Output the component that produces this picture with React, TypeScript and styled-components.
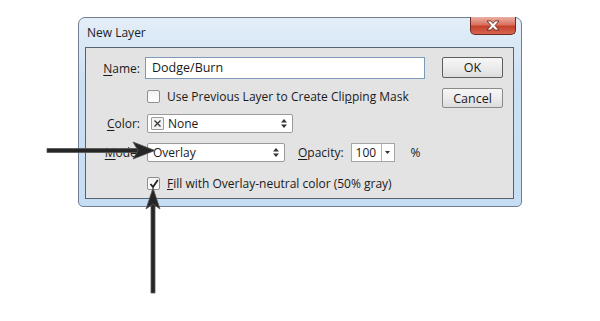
import styled, { createGlobalStyle } from 'styled-components';

const GlobalStyle = createGlobalStyle`
	html, body {
		margin: 0;
		padding: 0;
		background: #ffffff;
	}
	body {
		font-family: 'Open Sans', 'Liberation Sans', sans-serif;
	}
`;

const Stage = styled.div`
	position: relative;
	width: 600px;
	height: 321px;
	box-sizing: border-box;
	padding: 17px 0 0 78px;
	overflow: hidden;
`;

const Window = styled.div`
	width: 444px;
	height: 190px;
	box-sizing: border-box;
	border: 1px solid #6f7f8f;
	border-radius: 7px 7px 5px 5px;
	background: linear-gradient(180deg, #e4eef8 0%, #cbe0f3 35%, #c6def3 100%);
	display: flex;
	flex-direction: column;
`;

const TitleBar = styled.div`
	height: 29px;
	display: flex;
	justify-content: space-between;
	align-items: flex-start;
	padding-left: 8px;
	color: #1b1b1b;
	font-size: 12px;
	h1 {
		font-size: 12px;
		font-weight: normal;
		margin: 0;
		line-height: 29px;
	}
`;

const CloseButton = styled.div`
	width: 46px;
	height: 18px;
	margin: -1px 5px 0 0;
	box-sizing: border-box;
	border: 1px solid #6b2a22;
	border-top: none;
	border-radius: 0 0 5px 5px;
	background: linear-gradient(180deg, #eab0a4 0%, #d9725f 45%, #c4412c 55%, #d8654e 100%);
	display: flex;
	justify-content: center;
	align-items: center;
`;

const Panel = styled.div`
	flex: 1;
	margin: 0 7px 7px 6px;
	border: 1px solid #56626e;
	background: #e3e3e3;
	display: flex;
	padding-top: 9px;
	font-family: 'Open Sans', 'Liberation Sans', sans-serif;
	font-size: 12px;
	color: #1a1a1a;
`;

const Form = styled.div`
	flex: 1;
	display: flex;
	flex-direction: column;
`;

const Row = styled.div<{ $h: number; $mt?: number }>`
	height: ${(p) => p.$h}px;
	margin-top: ${(p) => p.$mt || 0}px;
	display: grid;
	grid-template-columns: 54px 1fr;
	column-gap: 7px;
	align-items: center;
`;

const Label = styled.label`
	text-align: right;
	white-space: nowrap;
	u {
		text-decoration-thickness: 1px;
		text-underline-offset: 2px;
	}
`;

const Controls = styled.div`
	display: flex;
	align-items: center;
	height: 100%;
`;

const TextInput = styled.div`
	width: 280px;
	height: 22px;
	margin-left: -2px;
	box-sizing: border-box;
	border: 1px solid #7d9ab8;
	background: #ffffff;
	padding-left: 6px;
	line-height: 20px;
	font-size: 12.5px;
`;

const Check = styled.div`
	width: 13px;
	height: 13px;
	box-sizing: border-box;
	border: 1px solid #8e8f8f;
	border-radius: 2px;
	background: linear-gradient(180deg, #f2f2f2, #ffffff);
	display: flex;
	justify-content: center;
	align-items: center;
	margin-right: 7px;
`;

const Select = styled.div<{ $w: number }>`
	width: ${(p) => p.$w}px;
	height: 100%;
	box-sizing: border-box;
	border: 1px solid #9a9a9a;
	border-radius: 2px;
	background: #ffffff;
	display: flex;
	align-items: center;
	padding: 0 5px 0 5px;
	span {
		flex: 1;
	}
`;

const Swatch = styled.div`
	width: 13px;
	height: 13px;
	box-sizing: border-box;
	border: 1px solid #9c9c9c;
	border-radius: 1px;
	background: #f4f4f4;
	display: flex;
	justify-content: center;
	align-items: center;
	margin: 0 4px 0 -2px;
`;

const OpacityLabel = styled.span`
	margin: 0 7px 0 13px;
	u {
		text-underline-offset: 2px;
	}
`;

const Combo = styled.div`
	width: 44px;
	height: 100%;
	box-sizing: border-box;
	border: 1px solid #a5a5a5;
	background: #ffffff;
	display: flex;
	span {
		flex: 1;
		padding-left: 4px;
		line-height: 17px;
	}
	div {
		width: 12px;
		border-left: 1px solid #b5b5b5;
		display: flex;
		justify-content: center;
		align-items: center;
	}
`;

const Percent = styled.span`
	margin-left: 16px;
`;

const Buttons = styled.div`
	width: 61px;
	margin-right: 10px;
	display: flex;
	flex-direction: column;
	gap: 10px;
`;

const Button = styled.div<{ $default?: boolean }>`
	height: ${(p) => (p.$default ? 21 : 20)}px;
	box-sizing: border-box;
	border: 1px solid ${(p) => (p.$default ? '#5e5e5e' : '#8a8a8a')};
	border-radius: 2px;
	background: linear-gradient(180deg, #f6f6f6 0%, #ececec 50%, #dcdcdc 100%);
	display: flex;
	justify-content: center;
	align-items: center;
	font-size: 12.5px;
`;

const Arrows = styled.svg`
	position: absolute;
	left: 0;
	top: 0;
	pointer-events: none;
`;

const Updown = () => (
	<svg width='6' height='9' viewBox='0 0 6 9'>
		<path d='M3 0 L6 3.5 H0 Z M3 9 L6 5.5 H0 Z' fill='#333' />
	</svg>
);

export default function App() {
	return (
		<>
			<GlobalStyle />
			<Stage>
				<Window>
					<TitleBar>
						<h1>New Layer</h1>
						<CloseButton>
							<svg width='14' height='11' viewBox='0 0 14 11'>
								<path
									d='M1 1 H5 L7 3.5 L9 1 H13 L9 5.5 L13 10 H9 L7 7.5 L5 10 H1 L5 5.5 Z'
									fill='#ffffff'
									stroke='#5a1d14'
									strokeWidth='0.8'
								/>
							</svg>
						</CloseButton>
					</TitleBar>
					<Panel>
						<Form>
							<Row $h={22}>
								<Label>
									<u>N</u>ame:
								</Label>
								<TextInput>Dodge/Burn</TextInput>
							</Row>
							<Row $h={15} $mt={9}>
								<span />
								<Controls>
									<Check />
									<span>
										Use Previous Layer to Create Cli<u>p</u>ping Mask
									</span>
								</Controls>
							</Row>
							<Row $h={18} $mt={11}>
								<Label>
									<u>C</u>olor:
								</Label>
								<Controls>
									<Select $w={146}>
										<Swatch>
											<svg width='7' height='7' viewBox='0 0 7 7'>
												<path d='M0.5 0.5 L6.5 6.5 M6.5 0.5 L0.5 6.5' stroke='#333' strokeWidth='1.3' />
											</svg>
										</Swatch>
										<span>None</span>
										<Updown />
									</Select>
								</Controls>
							</Row>
							<Row $h={19} $mt={11}>
								<Label>
									<u>M</u>ode:
								</Label>
								<Controls>
									<Select $w={138}>
										<span>Overlay</span>
										<Updown />
									</Select>
									<OpacityLabel>
										<u>O</u>pacity:
									</OpacityLabel>
									<Combo>
										<span>100</span>
										<div>
											<svg width='5' height='3' viewBox='0 0 5 3'>
												<path d='M0 0 H5 L2.5 3 Z' fill='#333' />
											</svg>
										</div>
									</Combo>
									<Percent>%</Percent>
								</Controls>
							</Row>
							<Row $h={14} $mt={13}>
								<span />
								<Controls>
									<Check>
										<svg width='10' height='10' viewBox='0 0 10 10'>
											<path d='M1.5 5 L4 8 L8.8 1' fill='none' stroke='#222' strokeWidth='1.8' />
										</svg>
									</Check>
									<span>
										<u>F</u>ill with Overlay-neutral color (50% gray)
									</span>
								</Controls>
							</Row>
						</Form>
						<Buttons>
							<Button $default>OK</Button>
							<Button>Cancel</Button>
						</Buttons>
					</Panel>
				</Window>
				<Arrows width='600' height='321' viewBox='0 0 600 321'>
					<g fill='#262626' stroke='#555' strokeWidth='0.8'>
						<path d='M47 148.5 H138 V152.5 H47 Z' />
						<path d='M155 150.5 L133 142 L138 150.5 L133 159 Z' />
						<path d='M151 203 H155 V293 H151 Z' />
						<path d='M153 188 L146 209 L153 204 L160 209 Z' />
					</g>
				</Arrows>
			</Stage>
		</>
	);
}
